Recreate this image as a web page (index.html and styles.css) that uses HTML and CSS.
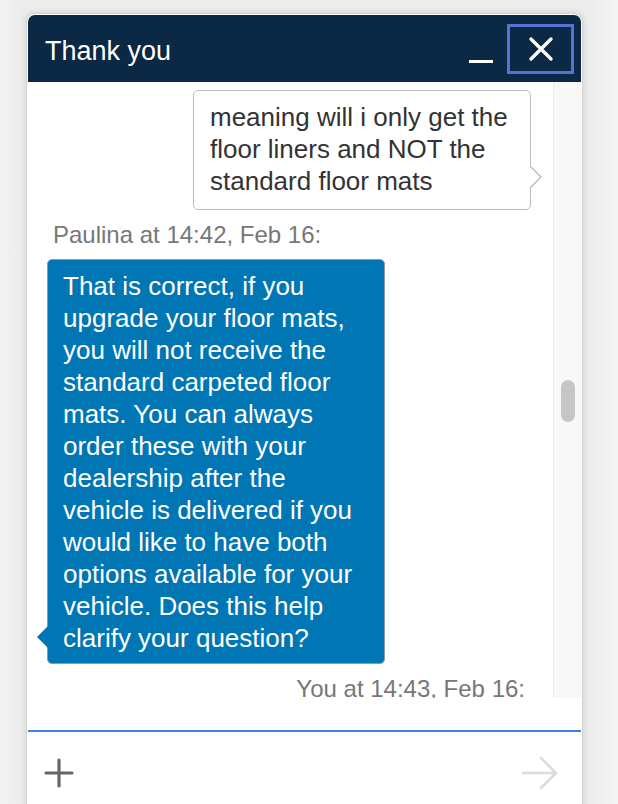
FILE: index.html
```html
<!DOCTYPE html>
<html lang="en">
<head>
    <meta charset="UTF-8">
    <meta name="viewport" content="width=device-width, initial-scale=1.0">
    <title>Chat</title>
    <link rel="stylesheet" href="styles.css">
</head>
<body>
    <div class="chat">
        <div class="chat-header">
            <span class="chat-title">Thank you</span>
            <div class="header-buttons">
                <button class="btn-min" aria-label="Minimize"><span></span></button>
                <button class="btn-close" aria-label="Close">
                    <svg width="26" height="26" viewBox="0 0 26 26">
                        <path d="M3 3 L23 23 M23 3 L3 23" stroke="#fff" stroke-width="3.4" stroke-linecap="round"/>
                    </svg>
                </button>
            </div>
        </div>

        <div class="chat-body">
            <div class="messages">
                <div class="msg msg-visitor">
                    <div class="bubble bubble-visitor">meaning will i only get the floor liners and NOT the standard floor mats</div>
                </div>

                <div class="msg msg-agent">
                    <div class="msg-meta">Paulina at 14:42, Feb 16:</div>
                    <div class="bubble bubble-agent">That is correct, if you upgrade your floor mats, you will not receive the standard carpeted floor mats. You can always order these with your dealership after the vehicle is delivered if you would like to have both options available for your vehicle. Does this help clarify your question?</div>
                </div>

                <div class="msg msg-visitor">
                    <div class="msg-meta">You at 14:43, Feb 16:</div>
                </div>
            </div>
            <div class="scrollbar"><div class="thumb"></div></div>
        </div>

        <div class="chat-spacer"></div>

        <div class="chat-input">
            <button class="btn-attach" aria-label="Attach">
                <svg width="30" height="30" viewBox="0 0 30 30">
                    <path d="M15 2 V28 M2 15 H28" stroke="#666" stroke-width="3.2" stroke-linecap="round"/>
                </svg>
            </button>
            <button class="btn-send" aria-label="Send">
                <svg width="38" height="38" viewBox="0 0 38 38">
                    <path d="M2 19 H35 M20 4 L35 19 L20 34" fill="none" stroke="#dcdcdc" stroke-width="2.6" stroke-linecap="round" stroke-linejoin="round"/>
                </svg>
            </button>
        </div>
    </div>
</body>
</html>
```

FILE: styles.css
```css
* {
    box-sizing: border-box;
}

body {
    margin: 0;
    padding: 13px 0 0 26px;
    height: 804px;
    overflow: hidden;
    font-family: "Liberation Sans", Arial, sans-serif;
    background: linear-gradient(to right, #f3f3f3 0, #ececec 22px, #ececec 590px, #f5f5f5 100%);
}

.chat {
    width: 557px;
    height: 820px;
    background: #fff;
    border: 1px solid #d2d2d2;
    border-radius: 9px 9px 0 0;
    padding: 1px 1px 0 1px;
    box-shadow: 0 0 6px rgba(0, 0, 0, 0.12);
    display: flex;
    flex-direction: column;
}

.chat-header {
    height: 67px;
    background: #0b2844;
    border-radius: 7px 7px 0 0;
    display: flex;
    align-items: center;
    justify-content: space-between;
    padding: 0 7px 0 17px;
    flex-shrink: 0;
}

.chat-title {
    color: #fff;
    font-size: 27px;
    margin-top: 5px;
}

.header-buttons {
    display: flex;
    align-items: center;
    gap: 14px;
}

button {
    background: none;
    border: none;
    padding: 0;
    cursor: pointer;
}

.btn-min {
    width: 24px;
    height: 50px;
    display: flex;
    align-items: flex-end;
    padding-bottom: 11px;
}

.btn-min span {
    display: block;
    width: 24px;
    height: 3px;
    background: #fff;
}

.btn-close {
    width: 67px;
    height: 50px;
    border: 3px solid #5673d4;
    display: flex;
    align-items: center;
    justify-content: center;
}

.chat-body {
    display: flex;
    height: 616px;
    flex-shrink: 0;
}

.messages {
    flex: 1;
    overflow: hidden;
    padding: 8px 0 0 0;
}

.msg {
    display: flex;
    flex-direction: column;
}

.msg-visitor {
    align-items: flex-end;
    padding-right: 22px;
}

.msg-agent {
    align-items: flex-start;
    padding-left: 19px;
}

.msg-meta {
    font-size: 24px;
    line-height: 28px;
    color: #777;
    margin: 11px 0 10px 0;
}

.msg-agent .msg-meta {
    margin-left: 6px;
}

.msg-visitor .msg-meta {
    margin: 11px 6px 0 0;
}

.bubble {
    position: relative;
    width: 338px;
    font-size: 26px;
    line-height: 32px;
    border-radius: 5px;
    padding: 10px 12px 12px 16px;
}

.bubble-visitor {
    color: #333;
    background: #fff;
    border: 1px solid #bdbdbd;
}

/* tail on the right side of the visitor bubble */
.bubble-visitor::before,
.bubble-visitor::after {
    content: "";
    position: absolute;
    top: 74px;
    width: 0;
    height: 0;
    border-style: solid;
}

.bubble-visitor::before {
    right: -12px;
    border-width: 12px 0 12px 12px;
    border-color: transparent transparent transparent #bdbdbd;
}

.bubble-visitor::after {
    right: -10px;
    top: 75px;
    border-width: 11px 0 11px 11px;
    border-color: transparent transparent transparent #fff;
}

.bubble-agent {
    color: #fff;
    background: #0076b4;
    border: 1px solid #8c9aa6;
    padding: 10px 12px 9px 15px;
}

/* tail on the left side of the agent bubble */
.bubble-agent::before {
    content: "";
    position: absolute;
    left: -11px;
    top: 366px;
    border-style: solid;
    border-width: 11px 11px 11px 0;
    border-color: transparent #0076b4 transparent transparent;
}

.scrollbar {
    width: 28px;
    background: #f8f8f8;
    border-left: 1px solid #ececec;
    position: relative;
}

.thumb {
    position: absolute;
    left: 7px;
    top: 298px;
    width: 14px;
    height: 42px;
    border-radius: 7px;
    background: #c6c6c6;
}

.chat-spacer {
    height: 34px;
    border-bottom: 2px solid #3c80e0;
    flex-shrink: 0;
}

.chat-input {
    display: flex;
    align-items: center;
    justify-content: space-between;
    padding: 22px 22px 0 16px;
}
```
